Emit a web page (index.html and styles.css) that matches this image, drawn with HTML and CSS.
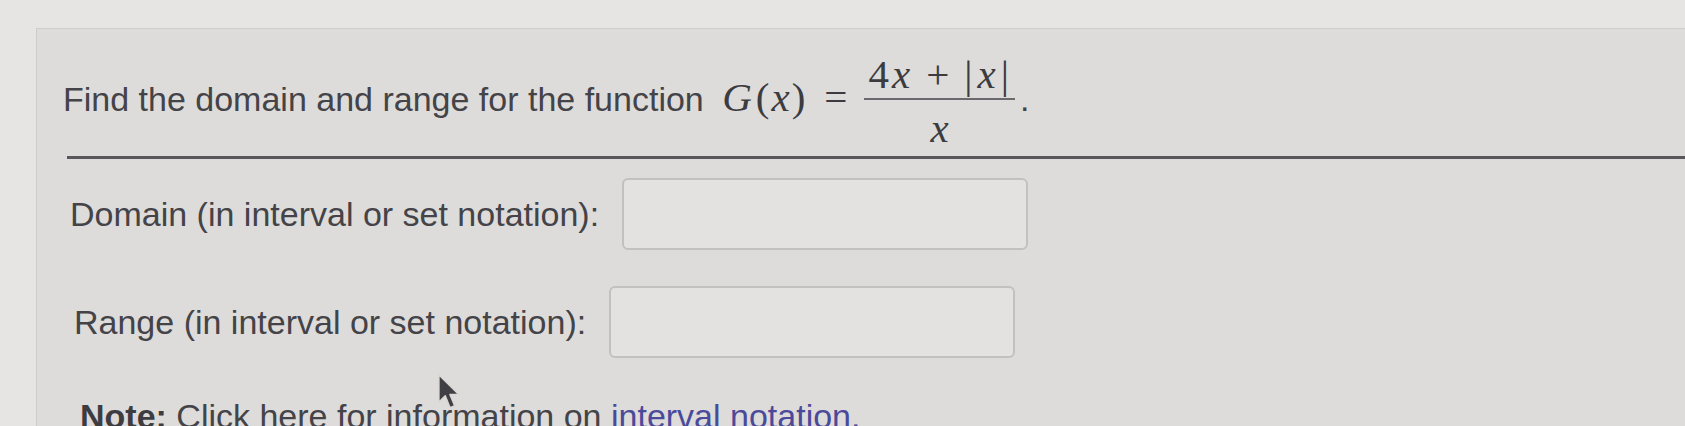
FILE: index.html
```html
<!DOCTYPE html>
<html lang="en">
<head>
<meta charset="utf-8">
<title>Domain and range</title>
<link rel="stylesheet" href="styles.css">
</head>
<body>
<div class="panel">
  <div class="question">
    <span class="prompt">Find the domain and range for the function</span>
    <span class="math">
      <span class="mi g">G</span><span class="mo">(</span><span class="mi">x</span><span class="mo">)</span><span class="rel">=</span><span class="frac"><span class="num"><span class="mn">4</span><span class="mi wide">x</span><span class="bin">+</span><span class="mo bar">|</span><span class="mi wide">x</span><span class="mo bar">|</span></span><span class="den"><span class="mi">x</span></span></span></span><span class="period">.</span>
  </div>
  <div class="divider"></div>
  <div class="row row-domain">
    <label class="label" for="domain">Domain (in interval or set notation):</label>
    <input class="answer" id="domain" type="text">
  </div>
  <div class="row row-range">
    <label class="label" for="range">Range (in interval or set notation):</label>
    <input class="answer" id="range" type="text">
  </div>
  <p class="note"><b>Note:</b> Click here for information on <a class="link" href="#">interval notation.</a></p>
  <svg class="cursor" width="26" height="40" viewBox="0 0 22 34" aria-hidden="true">
    <path d="M1.5 1.5 L1.5 25 L7 19.5 L11 29.5 L15 27.8 L11 18.3 L18.5 18.3 Z" fill="#3f3f44" stroke="#d9d8d6" stroke-width="1.4" stroke-linejoin="round"/>
  </svg>
</div>
</body>
</html>
```

FILE: styles.css
```css
html, body {
  margin: 0;
  padding: 0;
}
body {
  background: #e6e5e3;
  font-family: "Liberation Sans", Arial, sans-serif;
  color: #444348;
  overflow: hidden;
  height: 426px;
}
.panel {
  position: relative;
  margin: 28px 0 0 36px;
  padding-left: 26px;
  height: 398px;
  background: #dddcda;
  border-top: 1px solid #cfcecb;
  border-left: 1px solid #cdccc9;
  box-sizing: border-box;
}
.question {
  height: 127px;
  padding-top: 23px;
  box-sizing: border-box;
  font-size: 34px;
  white-space: nowrap;
}
.math {
  font-family: "Liberation Serif", "Times New Roman", serif;
  font-size: 41px;
  color: #3c3b40;
  margin-left: 8px;
}
.mi {
  font-style: italic;
  padding: 0 1px;
}
.mi.wide {
  padding: 0 3px;
}
.g {
  padding-right: 3px;
}
.mo {
  font-style: normal;
  padding: 0 1px;
}
.rel {
  margin: 0 14px 0 18px;
}
.frac {
  display: inline-flex;
  flex-direction: column;
  align-items: center;
  vertical-align: middle;
  padding: 0 3px;
}
.num {
  height: 46px;
  line-height: 44px;
  padding: 0 4px;
  border-bottom: 2px solid #6a696d;
  white-space: nowrap;
}
.bin {
  margin: 0 13px;
}
.bar {
  padding: 0 2px;
}
.den {
  height: 52px;
  line-height: 56px;
}
.period {
  font-size: 34px;
  margin-left: 2px;
}
.divider {
  height: 3px;
  margin-left: 4px;
  background: #58575b;
}
.row {
  display: flex;
  align-items: center;
  gap: 23px;
  font-size: 34px;
}
.row-domain {
  margin-top: 19px;
  padding-left: 7px;
}
.row-range {
  margin-top: 36px;
  padding-left: 11px;
}
.answer {
  width: 406px;
  height: 72px;
  box-sizing: border-box;
  border: 2px solid #c2c1be;
  border-radius: 6px;
  background: #e3e2e0;
  font-size: 30px;
  outline: none;
}
.note {
  margin: 38px 0 0 17px;
  font-size: 34px;
  line-height: 40px;
  white-space: nowrap;
}
.note b {
  font-weight: bold;
  color: #3d3c41;
}
.link {
  color: #4b4a9a;
  text-decoration: none;
}
.cursor {
  position: absolute;
  left: 400px;
  top: 344px;
}
```
